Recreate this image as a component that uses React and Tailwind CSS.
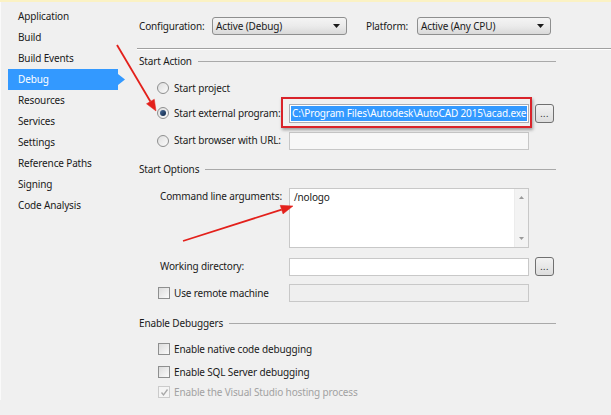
import React from "react";

const FONT = "font-['Segoe_UI','Noto_Sans',sans-serif] tracking-[-0.15px]";

function Radio({ checked }) {
  return (
    <span className="w-[12px] h-[12px] shrink-0 rounded-full border border-[#8e8f8f] bg-linear-to-br from-[#dedede] to-[#fbfbfb] flex items-center justify-center">
      {checked && <span className="w-[6px] h-[6px] rounded-full bg-linear-to-br from-[#4a6d9a] to-[#0e2747]" />}
    </span>
  );
}

function Check({ checked, disabled }) {
  return (
    <span
      className={
        disabled
          ? "w-[12px] h-[12px] shrink-0 border border-[#cbcbcb] bg-[#f4f4f4] flex items-center justify-center"
          : "w-[12px] h-[12px] shrink-0 border border-[#8e8f8f] bg-linear-to-br from-[#dcdcdc] to-[#fbfbfb] flex items-center justify-center"
      }
    >
      {checked && (
        <svg width="9" height="9" viewBox="0 0 9 9">
          <path d="M1.5 4.5 L3.5 7 L7.5 1.5" fill="none" stroke="#a8a8a8" strokeWidth="1.3" />
        </svg>
      )}
    </span>
  );
}

function Select({ value, w }) {
  return (
    <div
      className={`${w} h-[18px] rounded-[3px] border border-[#8e8f8f] bg-linear-to-b from-[#f4f4f4] via-[#ebebeb] to-[#d9d9d9] flex items-center pl-[3px] pr-[6px] text-[10px] text-[#1a1a1a]`}
    >
      <span className="flex-1 whitespace-nowrap">{value}</span>
      <svg width="7" height="4" viewBox="0 0 7 4">
        <path d="M0 0 L7 0 L3.5 4 Z" fill="#1a1a1a" />
      </svg>
    </div>
  );
}

function Browse() {
  return (
    <div className="w-[19px] h-[19px] ml-[6px] rounded-[3px] border border-[#707070] bg-linear-to-b from-[#f2f2f2] to-[#dddddd] flex items-end justify-center pb-[4px]">
      <span className="text-[9px] leading-none tracking-[0.5px] text-[#222]">...</span>
    </div>
  );
}

function Header({ children }) {
  return (
    <div className="w-[417px] h-[16px] flex items-center text-[10px] text-[#1a1a1a]">
      <span className="pr-[6px] whitespace-nowrap">{children}</span>
      <div className="flex-1 h-[1px] bg-[#a9a9a9]" />
    </div>
  );
}

const NAV = [
  "Application",
  "Build",
  "Build Events",
  "Debug",
  "Resources",
  "Services",
  "Settings",
  "Reference Paths",
  "Signing",
  "Code Analysis",
];

export default function App() {
  return (
    <div className={`relative w-[611px] h-[415px] bg-[#f0f0f0] overflow-hidden ${FONT}`}>
      <div className="h-[2px] bg-[#fbf2c4]" />
      <div className="flex">
        {/* sidebar */}
        <div className="w-[128px] pt-[4px] border-l border-[#fafafa]">
          {NAV.map((n) =>
            n === "Debug" ? (
              <div
                key={n}
                className="ml-[7px] w-[117px] h-[21px] bg-[#3399ff] text-white text-[10px] flex items-center pl-[10px] [clip-path:polygon(0_0,110px_0,110px_5px,117px_10.5px,110px_16px,110px_100%,0_100%)]"
              >
                {n}
              </div>
            ) : (
              <div key={n} className="ml-[7px] h-[21px] text-[10px] text-[#1a1a1a] flex items-center pl-[10px] whitespace-nowrap">
                {n}
              </div>
            )
          )}
        </div>

        {/* main */}
        <div className="flex-1 pl-[11px] pt-[15px] text-[10px] text-[#1a1a1a]">
          <div className="h-[18px] flex items-center">
            <span className="w-[73px] whitespace-nowrap">Configuration:</span>
            <Select value="Active (Debug)" w="w-[135px]" />
            <span className="ml-[19px] w-[51px] whitespace-nowrap">Platform:</span>
            <Select value="Active (Any CPU)" w="w-[134px]" />
          </div>
          <div className="-ml-[2px] mt-[13px] h-[2px] border-t border-[#a0a0a0] border-b border-b-white" />

          <div className="mt-[3px]">
            <Header>Start Action</Header>
          </div>

          <div className="mt-[9px] h-[20px] flex items-center">
            <div className="w-[150px] pl-[18px] flex items-center gap-[5px] whitespace-nowrap">
              <Radio />
              <span>Start project</span>
            </div>
          </div>
          <div className="mt-[5px] h-[20px] flex items-center">
            <div className="w-[150px] pl-[18px] flex items-center gap-[5px] whitespace-nowrap">
              <Radio checked />
              <span>Start external program:</span>
            </div>
            <div className="relative w-[240px] h-[19px] bg-white border border-[#abadb3] flex items-center px-[1px]">
              <span className="bg-[#3399ff] text-white leading-[15px] whitespace-nowrap px-[1px]">
                C:\Program Files\Autodesk\AutoCAD 2015\acad.exe
              </span>
              <div className="absolute -left-[9px] -top-[8px] -right-[4px] -bottom-[6px] border-[2.5px] border-[#d9232a] shadow-[1px_2px_3px_rgba(0,0,0,0.35)]" />
            </div>
            <Browse />
          </div>
          <div className="mt-[8px] h-[19px] flex items-center">
            <div className="w-[150px] pl-[18px] flex items-center gap-[5px] whitespace-nowrap">
              <Radio />
              <span>Start browser with URL:</span>
            </div>
            <div className="w-[240px] h-[18px] bg-[#f7f7f7] border border-[#c7c7c7]" />
          </div>

          <div className="mt-[11px]">
            <Header>Start Options</Header>
          </div>

          <div className="mt-[11px] flex">
            <div className="w-[150px] pl-[21px] pt-[1px] whitespace-nowrap">Command line arguments:</div>
            <div className="w-[240px] h-[60px] bg-white border border-[#c8c8c8] flex">
              <div className="flex-1 pl-[4px] pt-[1px] leading-[15px]">/nologo</div>
              <div className="w-[14px] bg-[#f3f3f3] border-l border-[#ececec] flex flex-col items-center justify-between py-[7px]">
                <svg width="5" height="3" viewBox="0 0 5 3">
                  <path d="M0 3 L5 3 L2.5 0 Z" fill="#9a9a9a" />
                </svg>
                <svg width="5" height="3" viewBox="0 0 5 3">
                  <path d="M0 0 L5 0 L2.5 3 Z" fill="#9a9a9a" />
                </svg>
              </div>
            </div>
          </div>

          <div className="mt-[9px] h-[19px] flex items-center">
            <div className="w-[150px] pl-[21px] whitespace-nowrap">Working directory:</div>
            <div className="w-[240px] h-[18px] bg-white border border-[#c8c8c8]" />
            <Browse />
          </div>

          <div className="mt-[8px] h-[18px] flex items-center">
            <div className="w-[150px] pl-[19px] flex items-center gap-[4px] whitespace-nowrap">
              <Check />
              <span>Use remote machine</span>
            </div>
            <div className="w-[240px] h-[18px] bg-[#efefef] border border-[#c8c8c8]" />
          </div>

          <div className="mt-[13px]">
            <Header>Enable Debuggers</Header>
          </div>

          <div className="mt-[10px] h-[16px] pl-[19px] flex items-center gap-[4px] whitespace-nowrap">
            <Check />
            <span>Enable native code debugging</span>
          </div>
          <div className="mt-[7px] h-[16px] pl-[19px] flex items-center gap-[4px] whitespace-nowrap">
            <Check />
            <span>Enable SQL Server debugging</span>
          </div>
          <div className="mt-[4px] h-[16px] pl-[19px] flex items-center gap-[4px] text-[#a2a2a2] whitespace-nowrap">
            <Check checked disabled />
            <span>Enable the Visual Studio hosting process</span>
          </div>
        </div>
      </div>

      {/* annotation arrows */}
      <svg className="absolute inset-0 pointer-events-none" width="611" height="415" viewBox="0 0 611 415">
        <g fill="#e3201b" stroke="#e3201b">
          <line x1="117" y1="45" x2="150.4" y2="101.5" strokeWidth="1.8" />
          <polygon points="156,111 146.5,103.8 154.3,99.2" strokeWidth="0.5" />
          <line x1="183" y1="241" x2="281.6" y2="209.6" strokeWidth="1.8" />
          <polygon points="293,206 283,213.9 280.2,205.3" strokeWidth="0.5" />
        </g>
      </svg>
    </div>
  );
}
